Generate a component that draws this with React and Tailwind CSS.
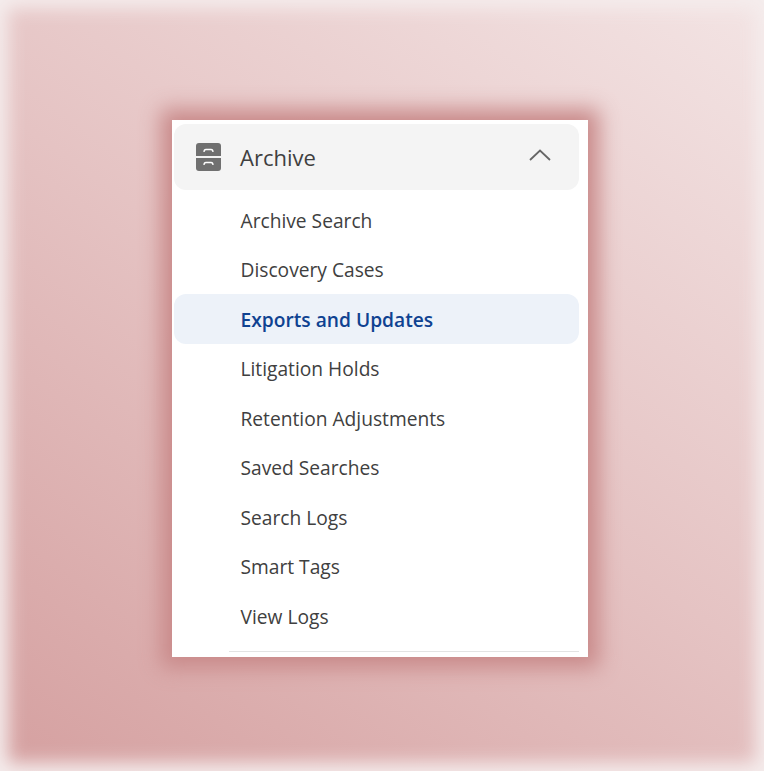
const LINKS = [
  'Archive Search',
  'Discovery Cases',
  'Exports and Updates',
  'Litigation Holds',
  'Retention Adjustments',
  'Saved Searches',
  'Search Logs',
  'Smart Tags',
  'View Logs',
]

function ArchiveIcon() {
  return (
    <svg width="25" height="28" viewBox="0 0 25 28" fill="none">
      <path d="M0 3a3 3 0 0 1 3-3h19a3 3 0 0 1 3 3v10H0z" fill="#707070" />
      <path d="M0 15h25v10a3 3 0 0 1-3 3H3a3 3 0 0 1-3-3z" fill="#707070" />
      <path d="M8 9c0-2 1-2.500 2-2.500h5c1 0 2 .5 2 2.500M8 22c0-2 1-2.500 2-2.500h5c1 0 2 .5 2 2.500" stroke="#fff" strokeWidth="1.3" />
    </svg>
  )
}

export default function App() {
  return (
    <div className="h-[771px] overflow-hidden bg-[linear-gradient(36deg,#d5a0a0_0%,#e5c3c3_50%,#f3e4e4_100%)] pl-[172px] pt-[120px] font-['Open_Sans',sans-serif] shadow-[inset_0_0_18px_8px_#f5eded]">
      <div className="h-[537px] w-[416px] overflow-hidden bg-white pl-[2px] pr-[9px] pt-[4px] shadow-[0_0_20px_11px_#c98a8a]">
        <div className="flex h-[66px] items-center rounded-xl bg-[#f4f4f4] pl-[22px] pr-[28px]">
          <ArchiveIcon />
          <span className="ml-[19px] flex-1 text-[22px] leading-[30px] text-[#404040]">Archive</span>
          <svg width="22" height="12" viewBox="0 0 22 12" fill="none" className="-mt-[5px]">
            <path d="M1 11 11 1.500 21 11" stroke="#666" strokeWidth="1.8" />
          </svg>
        </div>
        <nav className="mt-[5px]">
          {LINKS.map((link) =>
            link === 'Exports and Updates' ? (
              <div
                key={link}
                className="flex h-[49.5px] items-center rounded-xl bg-[#edf2f9] pl-[66.500px] pt-[3px] text-[19.200px] font-semibold text-[#0f4291]"
              >
                {link}
              </div>
            ) : (
              <div key={link} className="flex h-[49.5px] items-center pl-[66.500px] pt-[3px] text-[19.200px] text-[#404040]">
                {link}
              </div>
            ),
          )}
        </nav>
        <div className="ml-[55px] mt-[10px] h-px bg-[#e3e3e3]" />
      </div>
    </div>
  )
}
